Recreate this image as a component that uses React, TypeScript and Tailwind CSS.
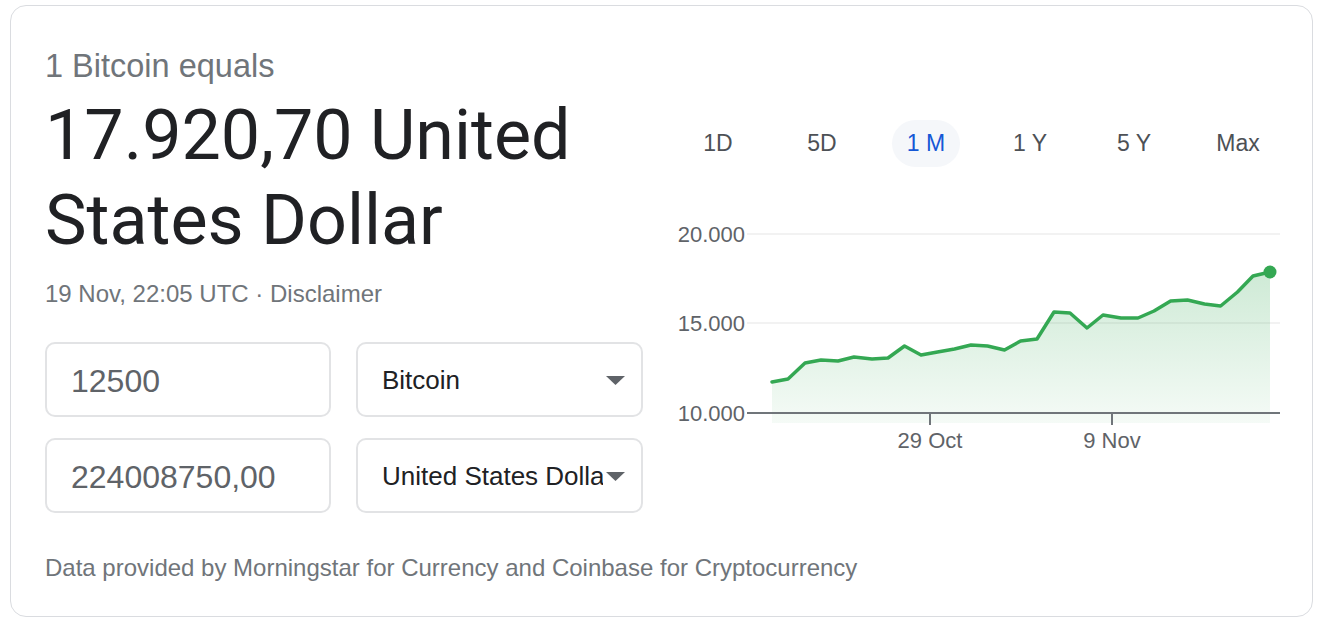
import React from 'react';

// chart points in page coordinates (x, y)
const points: [number, number][] = [
    [772, 382], [788, 379], [805, 363], [821, 360], [838, 361], [854, 357], [872, 359], [888, 358],
    [904.5, 346], [921, 355], [937.5, 352], [954.5, 349], [971, 345], [987.5, 346], [1004.5, 350],
    [1020.6, 341], [1037, 339], [1054, 312], [1070, 313], [1087, 328], [1103, 315], [1121, 318],
    [1138, 318], [1154, 311], [1170.6, 301], [1187.5, 300], [1204.5, 304], [1220.6, 306],
    [1237.5, 292], [1253, 276], [1270, 272],
];

const OX = 660;
const OY = 200;

const tabs = ['1D', '5D', '1 M', '1 Y', '5 Y', 'Max'];

const sans = "font-['Liberation_Sans',Arial,sans-serif]";

const Chart = () => {
    const line = points.map(([x, y]) => `${x - OX},${y - OY}`).join(' ');
    const area = `${line} ${1270 - OX},${423 - OY} ${772 - OX},${423 - OY}`;
    const gy = (y: number) => y - OY;
    const gx = (x: number) => x - OX;
    const label = `${sans} text-[22px] fill-[#5f6368]`;
    return (
        <svg width={640} height={260} viewBox="0 0 640 260" className="block">
            <defs>
                <linearGradient id="fillGrad" x1="0" y1="0" x2="0" y2="1">
                    <stop offset="0%" stopColor="#34a853" stopOpacity={0.24} />
                    <stop offset="100%" stopColor="#34a853" stopOpacity={0.05} />
                </linearGradient>
            </defs>
            <line x1={gx(747)} x2={gx(1280)} y1={gy(234)} y2={gy(234)} stroke="#eeeeee" strokeWidth={1.5} />
            <line x1={gx(747)} x2={gx(1280)} y1={gy(323)} y2={gy(323)} stroke="#eeeeee" strokeWidth={1.5} />
            <polygon points={area} fill="url(#fillGrad)" />
            <polyline points={line} fill="none" stroke="#34a853" strokeWidth={3.5} strokeLinejoin="round" strokeLinecap="round" />
            <circle cx={gx(1270)} cy={gy(272)} r={6.5} fill="#34a853" />
            <line x1={gx(747)} x2={gx(1280)} y1={gy(413)} y2={gy(413)} stroke="#70757a" strokeWidth={2} />
            <line x1={gx(930)} x2={gx(930)} y1={gy(413)} y2={gy(425)} stroke="#70757a" strokeWidth={2} />
            <line x1={gx(1112)} x2={gx(1112)} y1={gy(413)} y2={gy(425)} stroke="#70757a" strokeWidth={2} />
            <text x={gx(745)} y={gy(242)} textAnchor="end" className={label}>20.000</text>
            <text x={gx(745)} y={gy(331)} textAnchor="end" className={label}>15.000</text>
            <text x={gx(745)} y={gy(421)} textAnchor="end" className={label}>10.000</text>
            <text x={gx(930)} y={gy(448)} textAnchor="middle" className={label}>29 Oct</text>
            <text x={gx(1112)} y={gy(448)} textAnchor="middle" className={label}>9 Nov</text>
        </svg>
    );
};

const Arrow = () => (
    <svg width="19" height="9" viewBox="0 0 19 9" className="shrink-0">
        <path d="M0 0 L19 0 L9.5 9 Z" fill="#5f6368" />
    </svg>
);

const AmountBox = ({ value }: { value: string }) => (
    <div className={`w-[286px] h-[75px] rounded-[10px] border-2 border-[#e2e3e5] flex items-center pl-[24px] pt-[2px] text-[32px] text-[#5f6368] ${sans}`}>
        {value}
    </div>
);

const UnitSelect = ({ value }: { value: string }) => (
    <div className={`w-[287px] h-[75px] rounded-[10px] border-2 border-[#e2e3e5] flex items-center pl-[24px] pr-[16px] pt-[1px] text-[26px] text-[#202124] ${sans}`}>
        <span className="flex-1 overflow-hidden whitespace-nowrap mr-[3px]">{value}</span>
        <Arrow />
    </div>
);

export default function App() {
    return (
        <div className="w-[1324px] h-[632px] bg-white pt-[5px] pl-[10px]">
            <div className="w-[1303px] h-[612px] rounded-[16px] border border-[#dadce0] flex">
                <div className="w-[634px] pl-[34px] pt-[40px]">
                    <div className={`text-[32.5px] leading-[40px] text-[#70757a] ${sans}`}>1 Bitcoin equals</div>
                    <div className="mt-[7px] text-[70px] leading-[85px] text-[#202124] font-['Roboto','Liberation_Sans',sans-serif]">
                        17.920,70 United<br />States Dollar
                    </div>
                    <div className={`mt-[16px] text-[24px] leading-[30px] text-[#70757a] ${sans}`}>
                        19 Nov, 22:05 UTC · Disclaimer
                    </div>
                    <div className="mt-[33px] flex flex-col gap-[21px]">
                        <div className="flex gap-[25px]">
                            <AmountBox value="12500" />
                            <UnitSelect value="Bitcoin" />
                        </div>
                        <div className="flex gap-[25px]">
                            <AmountBox value="224008750,00" />
                            <UnitSelect value="United States Dollar" />
                        </div>
                    </div>
                    <div className={`mt-[40px] text-[24px] leading-[30px] text-[#70757a] whitespace-nowrap ${sans}`}>
                        Data provided by Morningstar for Currency and Coinbase for Cryptocurrency
                    </div>
                </div>
                <div className="flex-1 pt-[114px]">
                    <div className="flex pl-[21px]">
                        {tabs.map(t => (
                            <div key={t} className="w-[104px] h-[47px] flex items-center justify-center">
                                {t === '1 M' ? (
                                    <div className={`h-[47px] w-[68px] rounded-full bg-[#f5f7fa] flex items-center justify-center text-[23px] text-[#1558d6] ${sans}`}>{t}</div>
                                ) : (
                                    <div className={`text-[23px] text-[#4d5156] ${sans}`}>{t}</div>
                                )}
                            </div>
                        ))}
                    </div>
                    <div className="mt-[33px] ml-[15px]">
                        <Chart />
                    </div>
                </div>
            </div>
        </div>
    );
}
